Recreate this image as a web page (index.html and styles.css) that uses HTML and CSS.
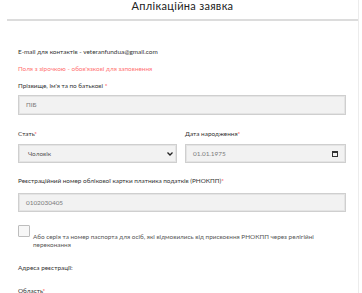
FILE: index.html
```html
<!DOCTYPE html>
<html lang="uk">
<head>
    <meta charset="UTF-8">
    <meta name="viewport" content="width=device-width, initial-scale=1.0">
    <title>Аплікаційна заявка</title>
    <link rel="stylesheet" href="styles.css">
</head>
<body>
    <div class="page">
        <header class="page-head">
            <h1>Аплікаційна заявка</h1>
        </header>

        <form class="form">
            <p class="contact">E-mail для контактів - veteranfundua@gmail.com</p>
            <p class="note">Поля з зірочкою - обов'язкові для заповнення</p>

            <!-- ПІБ -->
            <label class="label label-first">Прізвище, ім'я та по батькові <span class="req">*</span></label>
            <div class="field">ПІБ</div>

            <!-- стать + дата -->
            <div class="row">
                <div class="col">
                    <label class="label">Стать<span class="req">*</span></label>
                    <div class="field field-select">
                        <span>Чоловік</span>
                        <svg class="chevron" width="6" height="4" viewBox="0 0 6 4"><path d="M0.5 0.5 L3 3 L5.5 0.5" fill="none" stroke="#222" stroke-width="1.3"/></svg>
                    </div>
                </div>
                <div class="col">
                    <label class="label">Дата народження<span class="req">*</span></label>
                    <div class="field field-date">
                        <span>01.01.1975</span>
                        <svg class="cal" width="6" height="6" viewBox="0 0 6 6"><rect x="0.5" y="0.5" width="5" height="5" fill="none" stroke="#333" stroke-width="1"/><rect x="0.5" y="0.5" width="5" height="1.5" fill="#333"/></svg>
                    </div>
                </div>
            </div>

            <!-- РНОКПП -->
            <label class="label label-tax">Реєстраційний номер облікової картки платника податків (РНОКПП)<span class="req">*</span></label>
            <div class="field">0102030405</div>

            <div class="check">
                <span class="box"></span>
                <span class="check-text">Або серія та номер паспорта для осіб, які відмовились від присвоєння РНОКПП через релігійні переконання</span>
            </div>

            <p class="section">Адреса реєстрації:</p>

            <label class="label label-region">Область<span class="req">*</span></label>
        </form>
    </div>
</body>
</html>
```

FILE: styles.css
```css
/* Аплікаційна заявка */
body {
    margin: 0;
    font-family: Lato, "Open Sans", "Noto Sans", sans-serif;
    background-color: #ffffff;
    color: #333333;
}

.page {
    width: 358px;
    min-height: 293px;
    border-right: 1px solid #ececec;
}

/* заголовок */
.page-head {
    margin-left: 7px;
    height: 19px;
    border-bottom: 2px solid #dcdcdc;
}

.page-head h1 {
    margin: 0;
    font-size: 11px;
    line-height: 11px;
    font-weight: 400;
    text-align: center;
    letter-spacing: 0.3px;
    color: #222222;
}

/* форма */
.form {
    padding: 0 12px 0 18px;
    font-size: 6.4px;
    line-height: 10px;
}

.contact {
    margin: 26px 0 0;
    color: #333333;
}

.note {
    margin: 7px 0 0;
    color: #ff7373;
}

.label {
    display: block;
    color: #333333;
}

.label-first {
    margin-top: 7px;
}

.req {
    color: #ff4d4d;
}

.field {
    box-sizing: border-box;
    height: 20px;
    margin-top: 4px;
    padding: 0 7px;
    display: flex;
    align-items: center;
    justify-content: space-between;
    background-color: #f2f2f2;
    border: 1px solid #cfcfcf;
    box-shadow: inset 0 0 0 1px #e4e4e4;
    color: #7a7a7a;
}

.row {
    display: grid;
    grid-template-columns: 159px 161px;
    column-gap: 8px;
    margin-top: 14px;
}

.field-select {
    height: 19px;
    margin-top: 5px;
    padding: 0 3px 0 9px;
    color: #555555;
}

.field-date {
    height: 19px;
    margin-top: 5px;
    padding: 0 7px 0 7px;
}

.chevron, .cal {
    display: block;
}

.label-tax {
    margin-top: 13px;
}

.label-tax + .field {
    margin-top: 7px;
    height: 19px;
}

/* чекбокс */
.check {
    display: flex;
    align-items: flex-start;
    margin-top: 13px;
}

.box {
    flex: none;
    box-sizing: border-box;
    width: 12px;
    height: 12px;
    background-color: #f7f7f7;
    border: 1px solid #bdbdbd;
    border-radius: 1px;
}

.check-text {
    margin: 8px 0 0 3px;
    line-height: 8px;
    color: #555555;
}

.section {
    margin: 14px 0 0;
    color: #333333;
}

.label-region {
    margin-top: 13px;
}
```
